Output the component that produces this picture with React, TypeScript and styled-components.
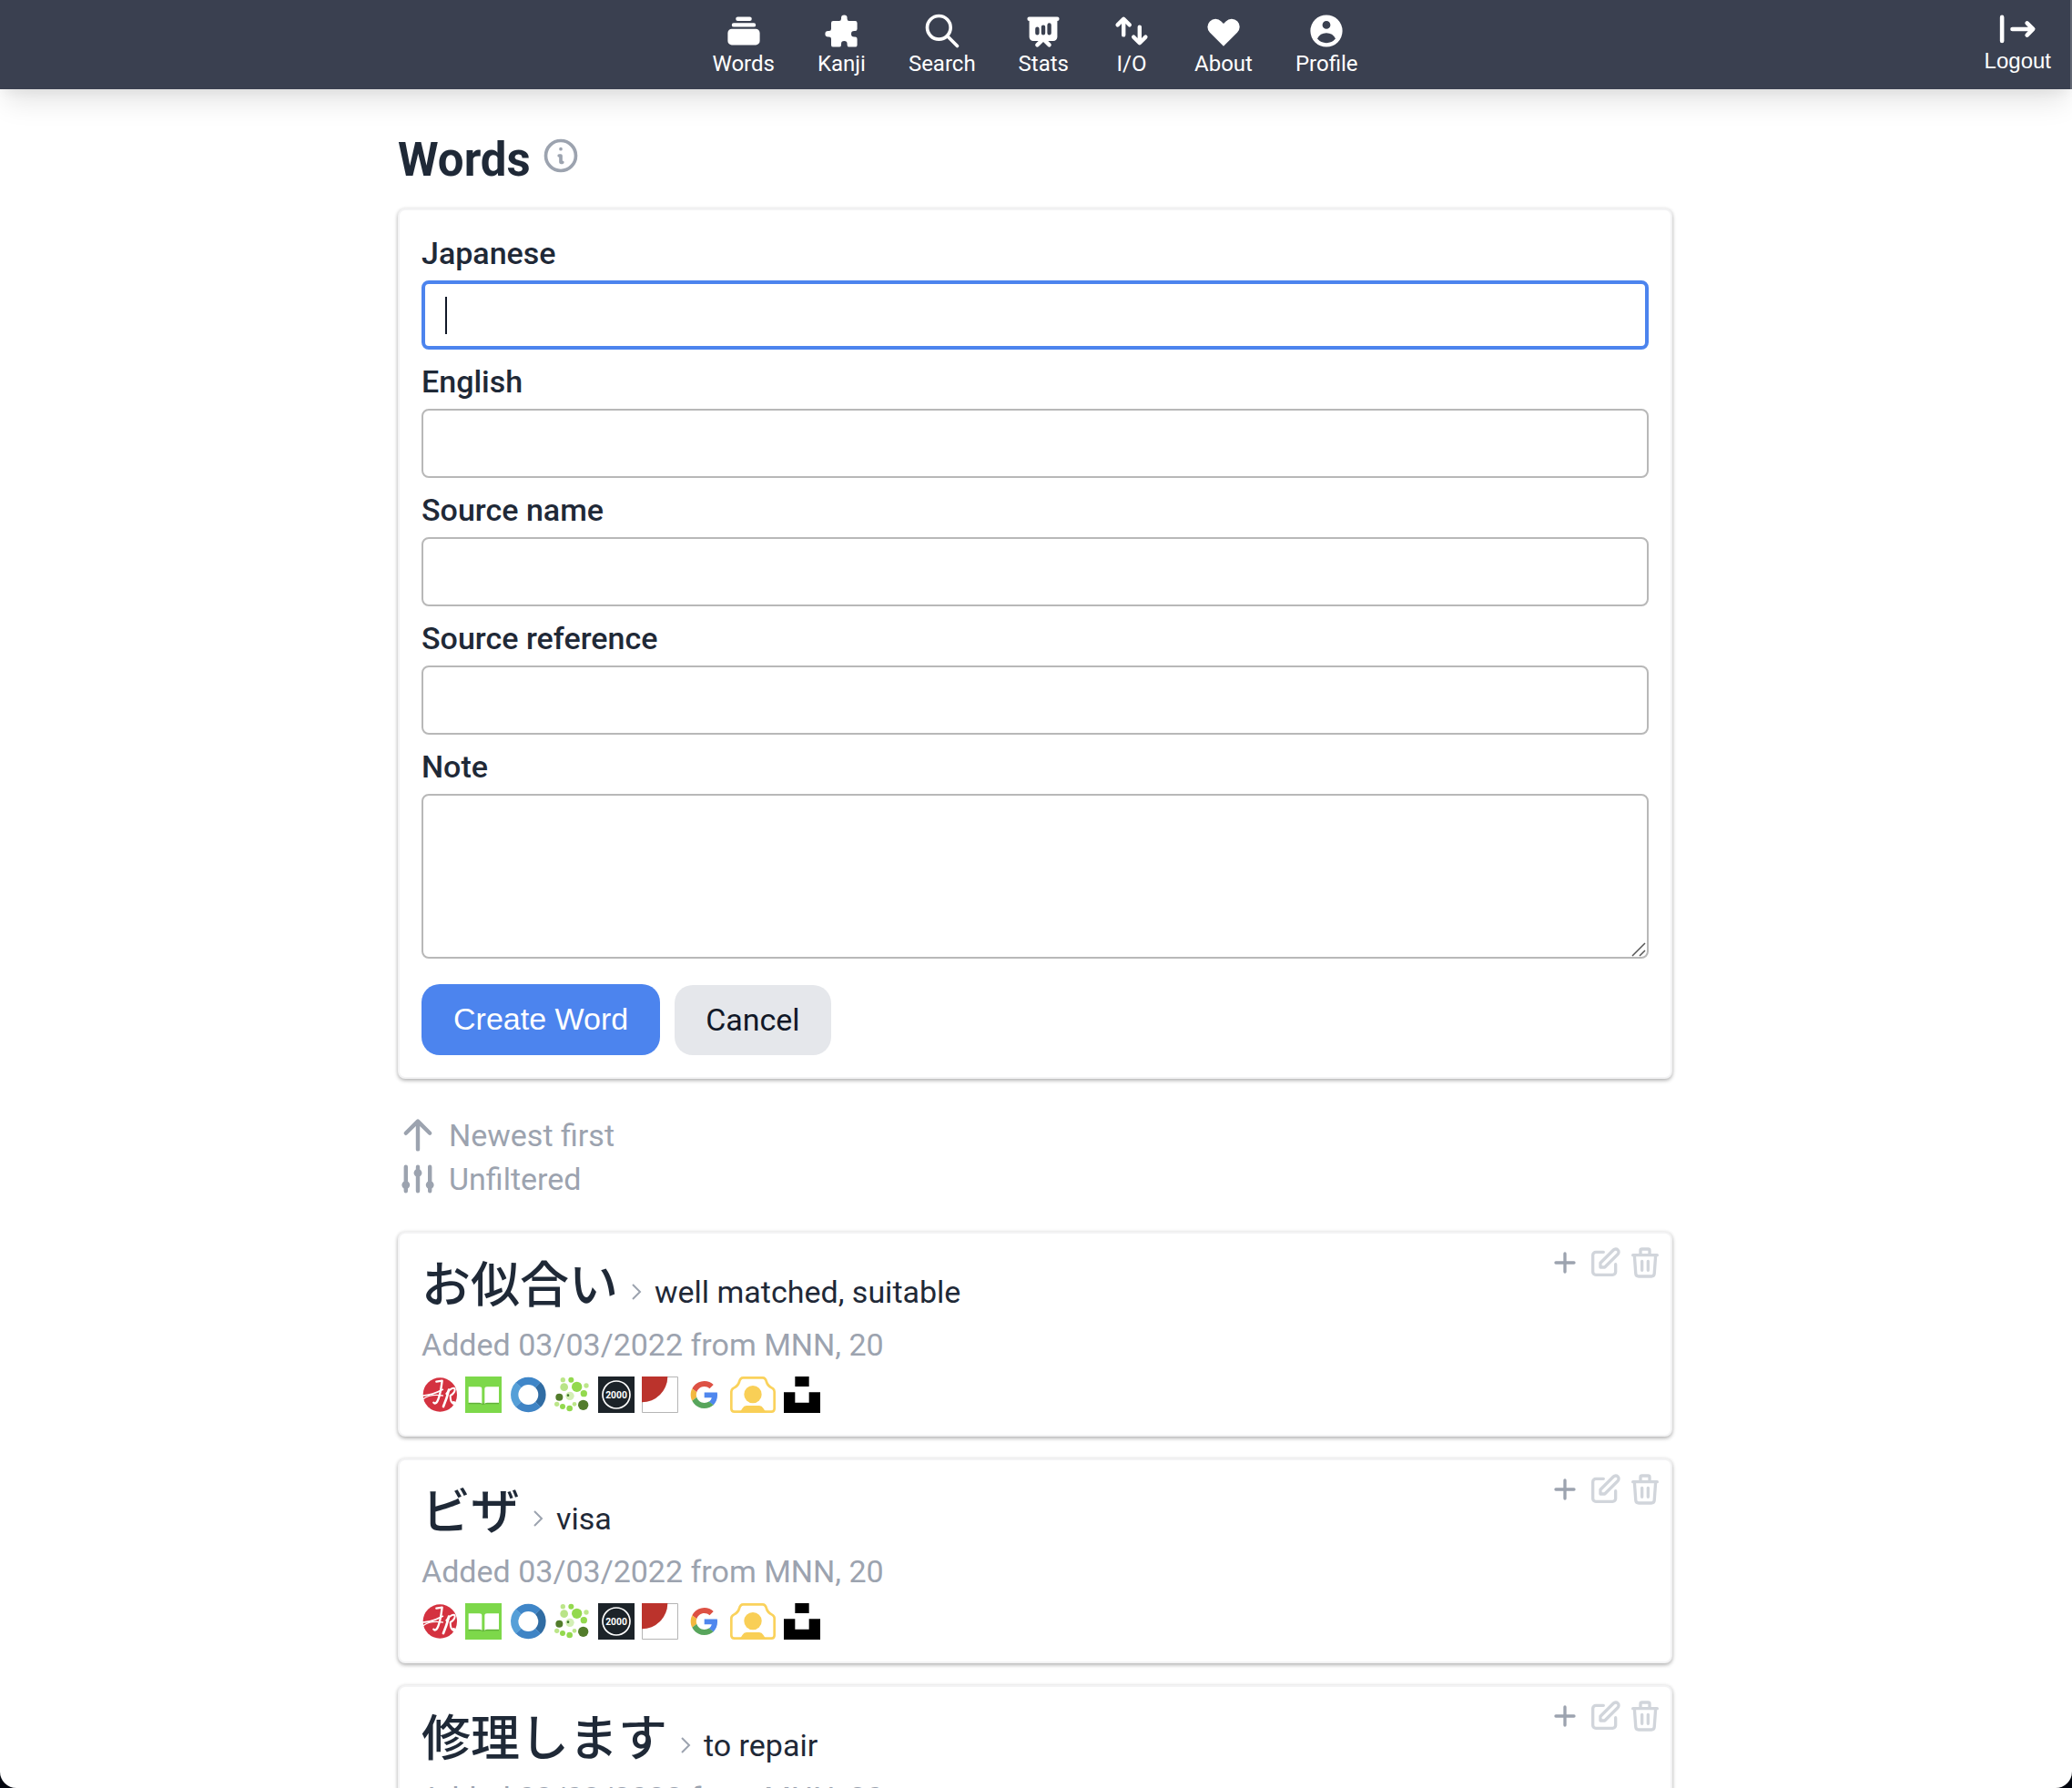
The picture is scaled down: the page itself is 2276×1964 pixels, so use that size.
import React from 'react';
import styled, { createGlobalStyle } from 'styled-components';
import {
  HiAdjustments,
  HiArrowUp,
  HiCollection,
  HiHeart,
  HiOutlineInformationCircle,
  HiOutlinePencilAlt,
  HiOutlinePlusSm,
  HiOutlineSearch,
  HiOutlineTrash,
  HiPresentationChartBar,
  HiPuzzle,
  HiSwitchVertical,
  HiUserCircle,
} from 'react-icons/hi';

const sans = `Roboto, "Noto Sans CJK JP", sans-serif`;
const system = `"Liberation Sans", Arial, sans-serif`;

const GlobalStyle = createGlobalStyle`
  *, *::before, *::after { box-sizing: border-box; }
  html { background: #02060f; }
  body { margin: 0; font-family: ${sans}; font-size: 34px; color: #1f2937; }
  button, input, textarea { font: inherit; color: inherit; margin: 0; }
  svg { display: block; flex: none; }
`;

const Page = styled.div`
  height: 100vh;
  overflow: hidden;
  background: #fff;
  border-radius: 0 0 18px 18px;
`;

const Header = styled.header`
  display: grid;
  grid-template-columns: 1fr auto 1fr;
  border-right: 2px solid #626773;
  background: #3a4050;
  color: #fff;
  font-size: 24px;
  line-height: 28px;
  box-shadow: 0 20px 30px -6px rgba(0, 0, 0, 0.1), 0 8px 12px -4px rgba(0, 0, 0, 0.05);
`;

const Nav = styled.nav`
  grid-column: 2;
  display: flex;
  gap: 47px;
  padding: 12px 0 14px;
`;

const NavLink = styled.a`
  display: flex;
  flex-direction: column;
  align-items: center;
  color: inherit;
  text-decoration: none;
`;

const LogoutButton = styled.button`
  justify-self: end;
  align-self: start;
  display: flex;
  flex-direction: column;
  align-items: center;
  padding: 9px 21px 0;
  border: 0;
  background: none;
  && { font-family: ${system}; color: #fff; }
`;

const Content = styled.div`
  padding: 48px 2px 0 0;
`;

const Main = styled.main`
  max-width: 1400px;
  margin: 0 auto;
`;

const TitleRow = styled.div`
  display: flex;
  align-items: flex-start;
  gap: 11px;
  margin-bottom: 23px;
`;

const Title = styled.h1`
  margin: 0;
  font-size: 51px;
  font-weight: 700;
  line-height: 60px;
`;

const InfoButton = styled.button`
  padding: 3px 0 0;
  border: 0;
  background: none;
  && { color: #9ca3af; }
`;

const Card = styled.section`
  border: 2px solid #f3f3f4;
  border-radius: 8px;
  background: #fff;
  box-shadow: 0 2px 4px rgba(0, 0, 0, 0.28), 0 0 4px rgba(0, 0, 0, 0.08);
`;

const Form = styled.form`
  display: flex;
  flex-direction: column;
  gap: 11px;
  padding: 23px 24px 24px;
`;

const Field = styled.div`
  display: flex;
  flex-direction: column;
  gap: 6px;
`;

const Label = styled.label`
  font-weight: 500;
  line-height: 48px;
`;

const InputBox = styled.div`
  position: relative;
  display: flex;
`;

const TextInput = styled.input<{ $active?: boolean }>`
  width: 100%;
  height: 76px;
  padding: 0 24px;
  border: ${(p) => (p.$active ? '4px solid #4c84ee' : '2px solid #b8b8b8')};
  border-radius: 8px;
  background: #fff;
  outline: none;
  caret-color: transparent;
`;

const Caret = styled.span`
  position: absolute;
  left: 26px;
  top: 18px;
  width: 2px;
  height: 41px;
  background: #111827;
`;

const TextArea = styled.textarea`
  display: block;
  width: 100%;
  height: 181px;
  padding: 16px 24px;
  border: 2px solid #b8b8b8;
  border-radius: 8px;
  outline: none;
  resize: none;
`;

const GripMark = styled.svg`
  position: absolute;
  right: 3px;
  bottom: 2px;
`;

const FormActions = styled.div`
  display: flex;
  align-items: flex-end;
  gap: 16px;
  padding-top: 17px;
`;

const FormButton = styled.button<{ $primary?: boolean }>`
  height: ${(p) => (p.$primary ? 78 : 77)}px;
  padding: 0 ${(p) => (p.$primary ? 35 : 34)}px 2px;
  border: 0;
  border-radius: 20px;
  background: ${(p) => (p.$primary ? '#4c84ee' : '#e5e7eb')};
  && {
    color: ${(p) => (p.$primary ? '#fff' : '#111827')};
    font-family: ${(p) => (p.$primary ? system : sans)};
  }
`;

const ListOptions = styled.div`
  display: flex;
  flex-direction: column;
  align-items: flex-start;
  margin: 38px 0 34px;
`;

const OptionButton = styled.button`
  display: flex;
  align-items: center;
  gap: 12px;
  height: 48px;
  padding: 0;
  border: 0;
  background: none;
  && { color: #9ca3af; }
`;

const WordList = styled.div`
  display: flex;
  flex-direction: column;
  gap: 24px;
`;

const WordCard = styled(Card).attrs({ as: 'article' })`
  display: flex;
  justify-content: space-between;
  align-items: flex-start;
`;

const WordBody = styled.div`
  padding: 23px 24px 24px;
`;

const WordHeading = styled.div`
  display: flex;
  align-items: baseline;
  gap: 8px;
  height: 60px;
  margin-bottom: 15px;
  line-height: 48px;
`;

const Japanese = styled.span`
  font-family: "Noto Sans CJK JP", sans-serif;
  font-size: 54px;
  font-weight: 500;
  line-height: 60px;
`;

const Meta = styled.p`
  margin: 0 0 11px;
  line-height: 48px;
  color: #9ca3af;
`;

const Resources = styled.div`
  height: 40px;
  line-height: 40px;
`;

const ResourceLink = styled.a`
  display: inline-block;
  height: 40px;
  vertical-align: top;
`;

const WordActions = styled.div`
  display: flex;
  gap: 4px;
  padding: 12px 8px 0 0;
`;

const IconButton = styled.button<{ $faint?: boolean }>`
  padding: 0;
  border: 0;
  background: none;
  && { color: ${(p) => (p.$faint ? '#d1d5db' : '#9ca3af')}; }
`;

const LogoutIcon = () => (
  <svg width="44" height="44" viewBox="0 0 24 24" fill="none" stroke="currentColor" strokeWidth="2.5" strokeLinecap="round" strokeLinejoin="round">
    <path d="M2.800 5.400v14.200M9 12.500h12M17.800 8.900l3.600 3.600-3.600 3.600" />
  </svg>
);

const Chevron = () => (
  <svg width="24" height="24" viewBox="0 0 24 24" fill="none" stroke="#9ca3af" strokeWidth="2">
    <path d="M8 4l8 8-8 8" />
  </svg>
);

const JapaneseSchoolLogo = () => (
  <svg width="40" height="40" viewBox="0 0 120 120">
    <circle cx="61" cy="60" r="56" fill="#d43240" />
    <g fill="none" stroke="#fff" strokeLinecap="round" strokeLinejoin="round">
      <path d="M49 17l19-3c-3 24-8 54-16 68-4 7-9 8-12 4" strokeWidth="7" />
      <path d="M4 63c24-1 44-8 66-20" strokeWidth="5" />
      <path d="M4 75c18-14 40-16 66-12" strokeWidth="4" />
      <path d="M90 44c-4 19-10 36-18 55" strokeWidth="8" />
      <path d="M82 57c10-17 26-23 28-15 1 9-9 18-15 21 0 15 3 26 11 24" strokeWidth="6" />
    </g>
    <circle cx="106" cy="87" r="6" fill="#fff" />
  </svg>
);

const BookLogo = () => (
  <svg width="40" height="40" viewBox="0 0 120 120">
    <path d="M0 0h120v120H0z" fill="#7dd84a" />
    <path d="M11 86h40q6 0 8 4 2-4 8-4h44v5H68q-6 0-9 3-3-3-9-3H11z" fill="#62b03b" />
    <path d="M11 34h36q8 0 8 7v49q-3-4-9-4H11zM64 41q0-7 8-7h39v52H73q-6 0-9 4z" fill="#fff" />
  </svg>
);

const RingLogo = () => (
  <svg width="40" height="40" viewBox="0 0 120 120" fill="none" strokeWidth="25">
    <path d="M29 28A45 45 0 0 0 29 92" stroke="#559fd8" />
    <path d="M29 28A45 45 0 0 1 93 28" stroke="#3f86c8" />
    <path d="M93 28A45 45 0 0 1 93 92" stroke="#306ca3" />
    <path d="M93 92A45 45 0 0 1 29 92" stroke="#3f84c5" />
  </svg>
);

const dots: [number, number, number, string][] = [
  [31, 11, 8, '#bce689'],
  [58, 11, 9, '#93d94e'],
  [35, 35, 13, '#b9e487'],
  [77, 34, 17, '#93d94e'],
  [108, 30, 8, '#bce689'],
  [100, 56, 11, '#93d94e'],
  [19, 68, 12, '#527c2b'],
  [54, 64, 14, '#d3efb5'],
  [48, 62, 4, '#3f7a2a'],
  [98, 94, 17, '#527c2b'],
  [11, 91, 8, '#bce689'],
  [30, 99, 9, '#93d94e'],
  [53, 105, 10, '#93d94e'],
  [69, 91, 7, '#bce689'],
];

const DotsLogo = () => (
  <svg width="40" height="40" viewBox="0 0 120 120">
    {dots.map(([cx, cy, r, fill]) => (
      <circle key={`${cx}-${cy}`} cx={cx} cy={cy} r={r} fill={fill} />
    ))}
  </svg>
);

const Kanji2000Logo = () => (
  <svg width="40" height="40" viewBox="0 0 120 120">
    <path d="M0 0h120v120H0z" fill="#1c2329" />
    <circle cx="60" cy="60" r="45" fill="none" stroke="#fff" strokeWidth="5" />
    <text x="60" y="71" textAnchor="middle" fill="#fff" fontFamily="Roboto" fontWeight="700" fontSize="31">2000</text>
  </svg>
);

const QuarterLogo = () => (
  <svg width="40" height="40" viewBox="0 0 120 120">
    <path d="M1.500 1.500h117v117H1.500z" fill="#fff" stroke="#b5b5b5" strokeWidth="3" />
    <path d="M0 0h85A85 85 0 0 1 0 85z" fill="#bb332c" />
  </svg>
);

const GoogleLogo = () => (
  <svg width="40" height="40" viewBox="-7.500 -8 64 64">
    <path fill="#dd5144" d="M24 9.500c3.540 0 6.710 1.220 9.210 3.600l6.850-6.850C35.900 2.380 30.470 0 24 0 14.620 0 6.510 5.380 2.560 13.220l7.980 6.190C12.430 13.720 17.740 9.500 24 9.500z" />
    <path fill="#4f87ee" d="M46.980 24.550c0-1.570-.15-3.090-.38-4.550H24v9.020h12.940c-.58 2.960-2.260 5.480-4.780 7.180l7.730 6c4.510-4.180 7.090-10.360 7.090-17.650z" />
    <path fill="#f3b83f" d="M10.530 28.590c-.48-1.450-.76-2.990-.76-4.590s.27-3.140.76-4.590l-7.980-6.190C.92 16.460 0 20.120 0 24c0 3.880.92 7.540 2.560 10.780l7.970-6.190z" />
    <path fill="#58a55c" d="M24 48c6.480 0 11.930-2.130 15.890-5.810l-7.730-6c-2.150 1.450-4.920 2.300-8.160 2.300-6.260 0-11.570-4.220-13.470-9.910l-7.980 6.190C6.510 42.620 14.620 48 24 48z" />
  </svg>
);

const CameraLogo = () => (
  <svg width="50" height="40" viewBox="0 0 150 120" fill="#f9cf56">
    <path d="M4 50Q4 42 12 38 26 31 30 18 33 4 43 4H107Q117 4 120 18 124 31 138 38 146 42 146 50V106Q146 116 136 116H14Q4 116 4 106z" fill="none" stroke="#fad25c" strokeWidth="8" />
    <circle cx="75" cy="59" r="29" />
    <path d="M28 118q8-4 13-14 4-8 13-8h42q9 0 13 8 5 10 13 14z" />
  </svg>
);

const BlocksLogo = () => (
  <svg width="40" height="40" viewBox="0 0 120 120">
    <path d="M37 0h46v33H37zM0 52h37v34h46V52h37v68H0z" />
  </svg>
);

const navItems = [
  { label: 'Words', Icon: HiCollection },
  { label: 'Kanji', Icon: HiPuzzle },
  { label: 'Search', Icon: HiOutlineSearch },
  { label: 'Stats', Icon: HiPresentationChartBar },
  { label: 'I/O', Icon: HiSwitchVertical },
  { label: 'About', Icon: HiHeart },
  { label: 'Profile', Icon: HiUserCircle },
];

const resources = [
  JapaneseSchoolLogo,
  BookLogo,
  RingLogo,
  DotsLogo,
  Kanji2000Logo,
  QuarterLogo,
  GoogleLogo,
  CameraLogo,
  BlocksLogo,
];

const words = [
  { japanese: 'お似合い', english: 'well matched, suitable' },
  { japanese: 'ビザ', english: 'visa' },
  { japanese: '修理します', english: 'to repair' },
];

const fields = [
  { id: 'english', label: 'English' },
  { id: 'source-name', label: 'Source name' },
  { id: 'source-reference', label: 'Source reference' },
];

export default function App() {
  return (
    <Page>
      <GlobalStyle />
      <Header>
        <Nav>
          {navItems.map(({ label, Icon }) => (
            <NavLink key={label} href="#">
              <Icon size={44} />
              {label}
            </NavLink>
          ))}
        </Nav>
        <LogoutButton type="button">
          <LogoutIcon />
          Logout
        </LogoutButton>
      </Header>
      <Content>
        <Main>
          <TitleRow>
            <Title>Words</Title>
            <InfoButton type="button">
              <HiOutlineInformationCircle size={44} />
            </InfoButton>
          </TitleRow>
          <Card>
            <Form onSubmit={(e) => e.preventDefault()}>
              <Field>
                <Label htmlFor="japanese">Japanese</Label>
                <InputBox>
                  <TextInput id="japanese" type="text" $active />
                  <Caret />
                </InputBox>
              </Field>
              {fields.map(({ id, label }) => (
                <Field key={id}>
                  <Label htmlFor={id}>{label}</Label>
                  <TextInput id={id} type="text" />
                </Field>
              ))}
              <Field>
                <Label htmlFor="note">Note</Label>
                <InputBox>
                  <TextArea id="note" />
                  <GripMark width="16" height="16" viewBox="0 0 16 16" stroke="#555" strokeWidth="1.500">
                    <path d="M1 15L15 1M9 15l6-6" />
                  </GripMark>
                </InputBox>
              </Field>
              <FormActions>
                <FormButton type="submit" $primary>Create Word</FormButton>
                <FormButton type="button">Cancel</FormButton>
              </FormActions>
            </Form>
          </Card>
          <ListOptions>
            <OptionButton type="button">
              <HiArrowUp size={44} />
              Newest first
            </OptionButton>
            <OptionButton type="button">
              <HiAdjustments size={44} />
              Unfiltered
            </OptionButton>
          </ListOptions>
          <WordList>
            {words.map(({ japanese, english }) => (
              <WordCard key={japanese}>
                <WordBody>
                  <WordHeading>
                    <Japanese lang="ja">{japanese}</Japanese>
                    <Chevron />
                    <span>{english}</span>
                  </WordHeading>
                  <Meta>Added 03/03/2022 from MNN, 20</Meta>
                  <Resources>
                    {resources.map((Logo, i) => (
                      <React.Fragment key={i}>
                        <ResourceLink href="#">
                          <Logo />
                        </ResourceLink>{' '}
                      </React.Fragment>
                    ))}
                  </Resources>
                </WordBody>
                <WordActions>
                  <IconButton type="button">
                    <HiOutlinePlusSm size={40} />
                  </IconButton>
                  <IconButton type="button" $faint>
                    <HiOutlinePencilAlt size={40} />
                  </IconButton>
                  <IconButton type="button" $faint>
                    <HiOutlineTrash size={40} />
                  </IconButton>
                </WordActions>
              </WordCard>
            ))}
          </WordList>
        </Main>
      </Content>
    </Page>
  );
}
